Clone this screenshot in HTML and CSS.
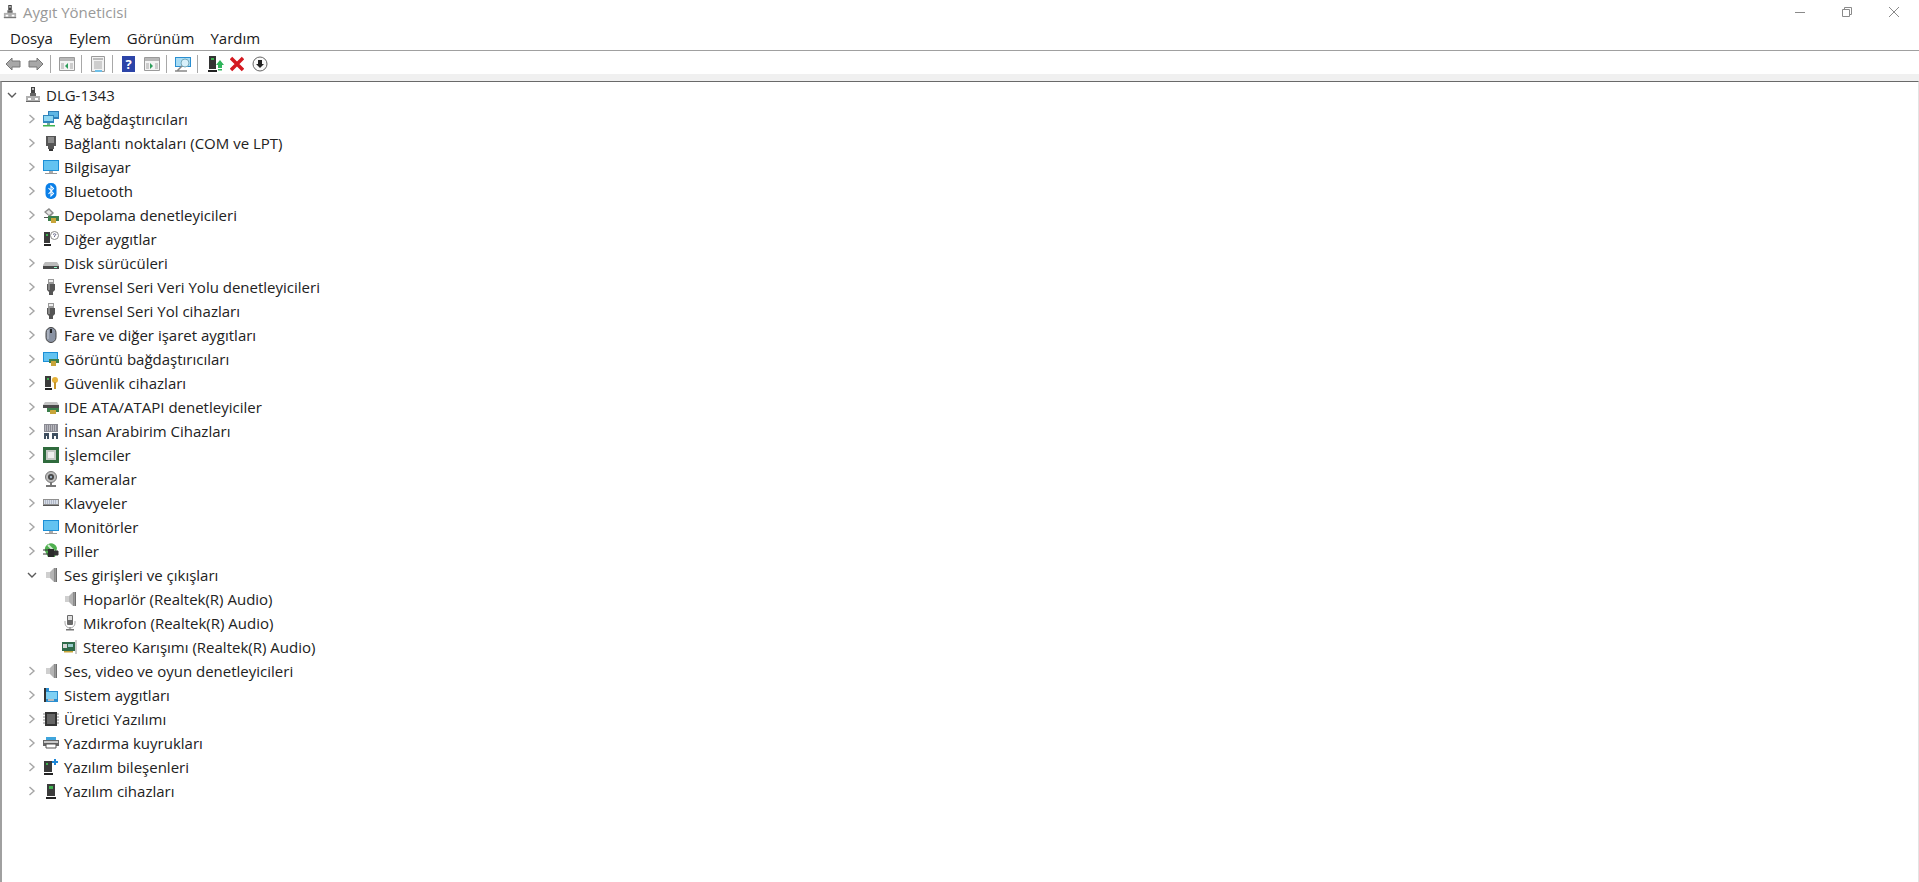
FILE: index.html
```html
<!DOCTYPE html>
<html lang="tr">

<head>
    <meta charset="UTF-8">
    <title>Aygıt Yöneticisi</title>
    <link rel="stylesheet" href="styles.css">
</head>

<body>
    <svg class="icon-defs" xmlns="http://www.w3.org/2000/svg">
        <symbol id="closed" viewBox="0 0 8 10"><path d="M1.500 1l4.500 4-4.500 4" fill="none" stroke="#a6a6a6" stroke-width="1.400"/></symbol>
        <symbol id="open" viewBox="0 0 10 8"><path d="M1 2l4 4 4-4" fill="none" stroke="#5a5a5a" stroke-width="1.400"/></symbol>
        <symbol id="pc" viewBox="0 0 16 16"><path d="M6 0h4v6H6z" fill="#444"/><path d="M7 1h2v2H7z" fill="#bbb"/><path d="M5 6h6v3H5z" fill="#666"/><path d="M1 9h14v6H1z" fill="#b0b0b0"/><path d="M3 11h3v2H3zM10 11h3v2h-3z" fill="#fff"/><path d="M1 14h14v1H1z" fill="#666"/></symbol>
        <symbol id="net" viewBox="0 0 16 16"><path d="M5 0h11v8H5z" fill="#2f7fb8"/><path d="M6 1h9v5H6z" fill="#5fb6e4"/><path d="M0 4h11v8H0z" fill="#2f86bd"/><path d="M1 5h9v5H1z" fill="#8fd6f2"/><path d="M4 12h3v2H4z" fill="#7a9"/><path d="M0 14h12v1.500H0z" fill="#3fb24f"/></symbol>
        <symbol id="port" viewBox="0 0 16 16"><path d="M3 1h10v10h-2v3H5v-3H3z" fill="#555"/><path d="M5 3h6M5 5h6M5 7h6" stroke="#c4c4c4"/><path d="M6 14h4v2H6z" fill="#333"/></symbol>
        <symbol id="monitor" viewBox="0 0 16 16"><path d="M0 1h16v11H0z" fill="#1c8fd6"/><path d="M1 2h14v9H1z" fill="#63c3f1"/><path d="M6 12h4v2H6z" fill="#aaa"/><path d="M2 14h12v1H2z" fill="#999"/></symbol>
        <symbol id="bt" viewBox="0 0 16 16"><rect x="2.500" y="0" width="11" height="16" rx="5" fill="#0a7fe8"/><path d="M5.500 5l5 5.500L8 13V3l2.500 2.500-5 5.500" fill="none" stroke="#fff" stroke-width="1.100"/></symbol>
        <symbol id="storage" viewBox="0 0 16 16"><path d="M1 5l5-4 5 5-4 4z" fill="#8a8a8a"/><path d="M3 5l3-2 3 3-3 2z" fill="#e4e4e4"/><path d="M5 9h11v5H5z" fill="#3c7f4c"/><path d="M8 11h5v5H8z" fill="#c8a53a"/><path d="M1 10h4v1H1z" fill="#555"/></symbol>
        <symbol id="other" viewBox="0 0 16 16"><path d="M1 1h6v11H1z" fill="#3b3b3b"/><path d="M3 3h2v2H3z" fill="#3db04e"/><path d="M1 13h7v2H1z" fill="#222"/><circle cx="11.500" cy="4.500" r="4" fill="#fff" stroke="#8a8a8a"/><path d="M10 3.500q1.500-1.500 3 0L11.500 5v1" fill="none" stroke="#6a6a8a"/></symbol>
        <symbol id="disk" viewBox="0 0 16 16"><path d="M2 7h12l2 3v4H0v-4z" fill="#bbb"/><path d="M0 11h16v3H0z" fill="#4a4a4a"/><path d="M11 12h3v1h-3z" fill="#9fc"/></symbol>
        <symbol id="usb" viewBox="0 0 16 16"><path d="M5 0h6v5H5z" fill="#999"/><path d="M6 1h4v2H6z" fill="#eee"/><path d="M4 5h8v6l-2 2v3H6v-3L4 11z" fill="#555"/><path d="M5 5h2v6H5z" fill="#888"/></symbol>
        <symbol id="mouse" viewBox="0 0 16 16"><rect x="3" y="0.500" width="10" height="15" rx="5" fill="#8a93a3" stroke="#444"/><path d="M8 2v4" stroke="#222" stroke-width="2"/><path d="M5 3v9" stroke="#c8ced8"/></symbol>
        <symbol id="display" viewBox="0 0 16 16"><path d="M0 1h15v10H0z" fill="#1c8fd6"/><path d="M1 2h13v8H1z" fill="#63c3f1"/><path d="M6 8h10v4H6z" fill="#3c7f4c"/><path d="M8 10h5v5H8z" fill="#c8a53a"/></symbol>
        <symbol id="security" viewBox="0 0 16 16"><path d="M2 1h6v11H2z" fill="#3b3b3b"/><path d="M4 3h2v2H4z" fill="#3db04e"/><path d="M2 13h7v2H2z" fill="#222"/><circle cx="12" cy="5" r="3" fill="#e6b23a"/><path d="M12 7v7" stroke="#c8962a" stroke-width="2"/></symbol>
        <symbol id="ide" viewBox="0 0 16 16"><path d="M2 3h12l2 3H0z" fill="#c4c4c4"/><path d="M0 6h16v3H0z" fill="#4a4a4a"/><path d="M4 9h12v4H4z" fill="#3c7f4c"/><path d="M7 11h6v4H7z" fill="#c8a53a"/></symbol>
        <symbol id="hid" viewBox="0 0 16 16"><path d="M1 1h14v8H1z" fill="#8a8a92"/><path d="M2 3h12M2 5h12M2 7h12" stroke="#e8e8ee" stroke-dasharray="1 1"/><path d="M1 10h5v6H4v-3H3v3H1zM9 10h6v6h-2v-3h-2v3H9z" fill="#3f4f60"/></symbol>
        <symbol id="cpu" viewBox="0 0 16 16"><path d="M0 0h16v16H0z" fill="#2f6b3d"/><path d="M3 3h10v10H3z" fill="#c4c8c4"/><path d="M5 5h6v6H5z" fill="#efefef"/></symbol>
        <symbol id="camera" viewBox="0 0 16 16"><circle cx="8" cy="6" r="5.500" fill="#bbb" stroke="#777"/><circle cx="8" cy="6" r="3" fill="#444"/><circle cx="8" cy="6" r="1.200" fill="#9ab"/><path d="M7 11h2v3H7zM3 14h10v2H3z" fill="#777"/></symbol>
        <symbol id="keyboard" viewBox="0 0 16 16"><path d="M0 4h16v7H0z" fill="#8f8f8f"/><path d="M1 5h14v4H1z" fill="#d6dce6"/><path d="M2 6h12M2 8h12" stroke="#8a93a8" stroke-dasharray="1 1"/><path d="M0 10h16v1H0z" fill="#555"/></symbol>
        <symbol id="battery" viewBox="0 0 16 16"><path d="M2 8a6 6 0 0 1 12-3l-2 9H5z" fill="#4fb04f"/><path d="M5 2l8 8" stroke="#d8ecd8" stroke-width="2"/><path d="M0 7h5M0 11h5M11 8h4v4h-4z" stroke="#333" fill="#333"/><path d="M5 6h6v8H5z" fill="#2c2c2c"/></symbol>
        <symbol id="speaker" viewBox="0 0 16 16"><path d="M3 5h4v6H3z" fill="#cfcfcf"/><path d="M11 1L7 5v6l4 4z" fill="#b4b4b4"/><path d="M11 1h1.500v14H11z" fill="#8c8c8c"/><path d="M12.500 1H14v14h-1.500z" fill="#6f6f6f"/></symbol>
        <symbol id="mic" viewBox="0 0 16 16"><rect x="5" y="0" width="6" height="10" rx="1" fill="#6a6a6a"/><path d="M6 1h4v4H6z" fill="#ddd"/><path d="M3 6v2a5 5 0 0 0 10 0V6" fill="none" stroke="#aaa"/><path d="M7.500 12h1v2h-1zM4 14h8v1.500H4z" fill="#777"/></symbol>
        <symbol id="card" viewBox="0 0 16 16"><path d="M0 3h13v9H0z" fill="#2f6b4a"/><path d="M1 5h4v4H1z" fill="#d8d8d8"/><path d="M6 5h5v3H6z" fill="#9cc"/><path d="M2 12h9v1.500H2z" fill="#c8a53a"/><path d="M13 1h2v14h-2z" fill="#ccc"/></symbol>
        <symbol id="system" viewBox="0 0 16 16"><path d="M1 1h5v3h9v11H1z" fill="#2a8ed0"/><path d="M2 5h12v7H2z" fill="#7ed0f4"/><path d="M1 1h2v14H1z" fill="#333"/><path d="M5 12h6v2H5z" fill="#bbb"/></symbol>
        <symbol id="firmware" viewBox="0 0 16 16"><path d="M2 1h12v14H2z" fill="#333"/><path d="M4 3h8v10H4z" fill="#666"/><path d="M0 3h2M0 6h2M0 9h2M0 12h2M14 3h2M14 6h2M14 9h2M14 12h2" stroke="#888"/></symbol>
        <symbol id="printer" viewBox="0 0 16 16"><path d="M3 2h10v4H3z" fill="#3fa5dc"/><path d="M0 5h16v6H0z" fill="#666"/><path d="M1 6h14v2H1z" fill="#c8c8c8"/><path d="M3 9h10v4H3z" fill="#fff" stroke="#555"/></symbol>
        <symbol id="component" viewBox="0 0 16 16"><path d="M1 2h8v11H1z" fill="#3b3b3b"/><path d="M3 4h2v2H3z" fill="#3db04e"/><path d="M1 14h9v2H1z" fill="#222"/><path d="M11 0h2v2h2v2h-2v2h-2V4H9V2h2z" fill="#1e86d6"/></symbol>
        <symbol id="software" viewBox="0 0 16 16"><path d="M4 1h8v12H4z" fill="#3b3b3b"/><path d="M6 3h4v3H6z" fill="#3db04e"/><path d="M3 14h10v2H3z" fill="#222"/></symbol>
    </svg>

    <header class="title-bar">
        <div class="title">
            <svg class="title-icon"><use href="#pc"/></svg>
            <span>Aygıt Yöneticisi</span>
        </div>
        <div class="window-buttons">
            <svg viewBox="0 0 10 10"><path d="M0 5.500h10" stroke="#8a8a8a"/></svg>
            <svg viewBox="0 0 10 10"><path d="M.5 2.500h7v7h-7zM2.500 2.500v-2h7v7h-2" fill="none" stroke="#8a8a8a"/></svg>
            <svg viewBox="0 0 10 10"><path d="M0 0l10 10M10 0L0 10" stroke="#8a8a8a"/></svg>
        </div>
    </header>

    <nav class="menu-bar">
        <span>Dosya</span>
        <span>Eylem</span>
        <span>Görünüm</span>
        <span>Yardım</span>
    </nav>

    <div class="tool-bar">
        <svg class="tool" viewBox="0 0 16 14"><path d="M1 7l6-6v3h8v6H7v3z" fill="#a8a8a8" stroke="#777"/></svg>
        <svg class="tool" viewBox="0 0 16 14"><path d="M15 7L9 1v3H1v6h8v3z" fill="#a8a8a8" stroke="#777"/></svg>
        <i class="sep"></i>
        <svg class="tool" viewBox="0 0 16 14"><path d="M.5.500h15v13H.500z" fill="#f4f4f4" stroke="#9a9a9a"/><path d="M1 1h14v3H1z" fill="#b8b8b8"/><path d="M2 6h3v6H2zM11 6h3v6h-3z" fill="#ccc"/><path d="M9 6v6L6 9z" fill="#2e9e5b"/></svg>
        <i class="sep"></i>
        <svg class="tool" viewBox="0 0 16 16"><path d="M1.500.500h13v15h-13z" fill="#f2f2f2" stroke="#9a9a9a"/><path d="M3 2h10v2H3z" fill="#bbb"/><path d="M4 6h8M4 8h8M4 10h8M4 12h8" stroke="#aaa"/><path d="M5 14h7v2H5z" fill="#6fc0e8"/></svg>
        <i class="sep"></i>
        <span class="help">?</span>
        <svg class="tool" viewBox="0 0 16 14"><path d="M.5.500h15v13H.500z" fill="#f4f4f4" stroke="#9a9a9a"/><path d="M1 1h14v3H1z" fill="#b8b8b8"/><path d="M2 6h3v6H2zM11 6h3v6h-3z" fill="#ccc"/><path d="M6 6v6l3-3z" fill="#2e9e5b"/></svg>
        <i class="sep"></i>
        <svg class="tool" viewBox="0 0 16 16"><path d="M0 1h16v10H0z" fill="#2a8ed0"/><path d="M1 2h14v8H1z" fill="#a8dcf4"/><circle cx="10" cy="7" r="4" fill="#d8f0fa" stroke="#7ab"/><path d="M7 10l-5 5M0 15h12" stroke="#888" stroke-width="1.500"/></svg>
        <i class="sep"></i>
        <svg class="tool driver" viewBox="0 0 16 16"><path d="M1 0h7v13H1z" fill="#333"/><path d="M3 2h3v2H3z" fill="#3db04e"/><path d="M0 14h9v2H0z" fill="#222"/><path d="M12 4l4 5h-2v3h-4V9H8z" fill="#2fb45a"/><path d="M10 13h4v1.500h-4z" fill="#2fb45a"/></svg>
        <svg class="tool cross" viewBox="0 0 14 14"><path d="M1 1l12 12M13 1L1 13" stroke="#d41920" stroke-width="3.500"/></svg>
        <svg class="tool round" viewBox="0 0 16 16"><circle cx="8" cy="8" r="7" fill="#fafafa" stroke="#666"/><path d="M8 12L4 8h2V4h4v4h2z" fill="#222"/></svg>
    </div>
    <div class="tool-strip"></div>

    <main class="tree">
        <div class="row root"><svg class="arrow open"><use href="#open"/></svg><svg class="icon"><use href="#pc"/></svg><span>DLG-1343</span></div>
        <div class="row"><svg class="arrow"><use href="#closed"/></svg><svg class="icon"><use href="#net"/></svg><span>Ağ bağdaştırıcıları</span></div>
        <div class="row"><svg class="arrow"><use href="#closed"/></svg><svg class="icon"><use href="#port"/></svg><span>Bağlantı noktaları (COM ve LPT)</span></div>
        <div class="row"><svg class="arrow"><use href="#closed"/></svg><svg class="icon"><use href="#monitor"/></svg><span>Bilgisayar</span></div>
        <div class="row"><svg class="arrow"><use href="#closed"/></svg><svg class="icon"><use href="#bt"/></svg><span>Bluetooth</span></div>
        <div class="row"><svg class="arrow"><use href="#closed"/></svg><svg class="icon"><use href="#storage"/></svg><span>Depolama denetleyicileri</span></div>
        <div class="row"><svg class="arrow"><use href="#closed"/></svg><svg class="icon"><use href="#other"/></svg><span>Diğer aygıtlar</span></div>
        <div class="row"><svg class="arrow"><use href="#closed"/></svg><svg class="icon"><use href="#disk"/></svg><span>Disk sürücüleri</span></div>
        <div class="row"><svg class="arrow"><use href="#closed"/></svg><svg class="icon"><use href="#usb"/></svg><span>Evrensel Seri Veri Yolu denetleyicileri</span></div>
        <div class="row"><svg class="arrow"><use href="#closed"/></svg><svg class="icon"><use href="#usb"/></svg><span>Evrensel Seri Yol cihazları</span></div>
        <div class="row"><svg class="arrow"><use href="#closed"/></svg><svg class="icon"><use href="#mouse"/></svg><span>Fare ve diğer işaret aygıtları</span></div>
        <div class="row"><svg class="arrow"><use href="#closed"/></svg><svg class="icon"><use href="#display"/></svg><span>Görüntü bağdaştırıcıları</span></div>
        <div class="row"><svg class="arrow"><use href="#closed"/></svg><svg class="icon"><use href="#security"/></svg><span>Güvenlik cihazları</span></div>
        <div class="row"><svg class="arrow"><use href="#closed"/></svg><svg class="icon"><use href="#ide"/></svg><span>IDE ATA/ATAPI denetleyiciler</span></div>
        <div class="row"><svg class="arrow"><use href="#closed"/></svg><svg class="icon"><use href="#hid"/></svg><span>İnsan Arabirim Cihazları</span></div>
        <div class="row"><svg class="arrow"><use href="#closed"/></svg><svg class="icon"><use href="#cpu"/></svg><span>İşlemciler</span></div>
        <div class="row"><svg class="arrow"><use href="#closed"/></svg><svg class="icon"><use href="#camera"/></svg><span>Kameralar</span></div>
        <div class="row"><svg class="arrow"><use href="#closed"/></svg><svg class="icon"><use href="#keyboard"/></svg><span>Klavyeler</span></div>
        <div class="row"><svg class="arrow"><use href="#closed"/></svg><svg class="icon"><use href="#monitor"/></svg><span>Monitörler</span></div>
        <div class="row"><svg class="arrow"><use href="#closed"/></svg><svg class="icon"><use href="#battery"/></svg><span>Piller</span></div>
        <div class="row"><svg class="arrow open"><use href="#open"/></svg><svg class="icon"><use href="#speaker"/></svg><span>Ses girişleri ve çıkışları</span></div>
        <div class="row child"><svg class="icon"><use href="#speaker"/></svg><span>Hoparlör (Realtek(R) Audio)</span></div>
        <div class="row child"><svg class="icon"><use href="#mic"/></svg><span>Mikrofon (Realtek(R) Audio)</span></div>
        <div class="row child"><svg class="icon"><use href="#card"/></svg><span>Stereo Karışımı (Realtek(R) Audio)</span></div>
        <div class="row"><svg class="arrow"><use href="#closed"/></svg><svg class="icon"><use href="#speaker"/></svg><span>Ses, video ve oyun denetleyicileri</span></div>
        <div class="row"><svg class="arrow"><use href="#closed"/></svg><svg class="icon"><use href="#system"/></svg><span>Sistem aygıtları</span></div>
        <div class="row"><svg class="arrow"><use href="#closed"/></svg><svg class="icon"><use href="#firmware"/></svg><span>Üretici Yazılımı</span></div>
        <div class="row"><svg class="arrow"><use href="#closed"/></svg><svg class="icon"><use href="#printer"/></svg><span>Yazdırma kuyrukları</span></div>
        <div class="row"><svg class="arrow"><use href="#closed"/></svg><svg class="icon"><use href="#component"/></svg><span>Yazılım bileşenleri</span></div>
        <div class="row"><svg class="arrow"><use href="#closed"/></svg><svg class="icon"><use href="#software"/></svg><span>Yazılım cihazları</span></div>
    </main>
</body>

</html>
```

FILE: styles.css
```css
html,
body {
    height: 100%;
}

body {
    margin: 0;
    display: flex;
    flex-direction: column;
    overflow: hidden;
    background-color: #fff;
    color: #222;
    font-family: "Open Sans", "Noto Sans", sans-serif;
    font-size: 15px;
}

.icon-defs {
    display: none;
}

.title-bar {
    height: 26px;
    padding-bottom: 3px;
    box-sizing: border-box;
    display: flex;
    justify-content: space-between;
    align-items: center;
    color: #999;
}

.title {
    display: flex;
    align-items: center;
    gap: 6px;
    padding-left: 3px;
}

.title-icon {
    width: 14px;
    height: 16px;
}

.window-buttons {
    display: flex;
    gap: 37px;
    padding-right: 20px;
}

.window-buttons svg {
    width: 10px;
    height: 10px;
}

.menu-bar {
    height: 25px;
    display: flex;
    align-items: center;
    gap: 16px;
    padding-left: 10px;
    border-bottom: 1px solid #a0a0a0;
    box-sizing: border-box;
    color: #1a1a1a;
}

.tool-bar {
    height: 23px;
    padding: 2px 0 0 5px;
    box-sizing: border-box;
    display: flex;
    align-items: center;
}

.tool {
    width: 16px;
    height: 16px;
    flex-shrink: 0;
}

.tool + .tool {
    margin-left: 7px;
}

.sep {
    width: 1px;
    height: 18px;
    margin: 0 8px 0 6px;
    background-color: #a8a8a8;
}

.help {
    width: 13px;
    height: 16px;
    margin: 0 9px 0 1px;
    background-color: #2c44a8;
    color: #fff;
    font-size: 13px;
    font-weight: bold;
    line-height: 16px;
    text-align: center;
}

.tool.driver {
    margin-left: 2px;
}

.tool.cross {
    width: 14px;
    margin-left: 6px;
}

.tool.round {
    margin-left: 8px;
}

.tool-strip {
    height: 7px;
    background-color: #f0f0f0;
}

.tree {
    flex: 1;
    padding-top: 1px;
    border-top: 1px solid #696969;
    border-left: 2px solid #a0a0a0;
    border-right: 1px solid #e3e3e3;
}

.row {
    height: 24px;
    display: flex;
    align-items: center;
    padding-left: 26px;
}

.row.root {
    padding-left: 6px;
}

.row.child {
    padding-left: 60px;
}

.arrow {
    width: 8px;
    height: 10px;
    margin-right: 7px;
}

.arrow.open {
    width: 10px;
    height: 8px;
    margin-left: -1px;
    margin-right: 6px;
}

.row.root .arrow.open {
    margin-right: 8px;
}

.icon {
    width: 16px;
    height: 16px;
    margin-right: 5px;
}
```
